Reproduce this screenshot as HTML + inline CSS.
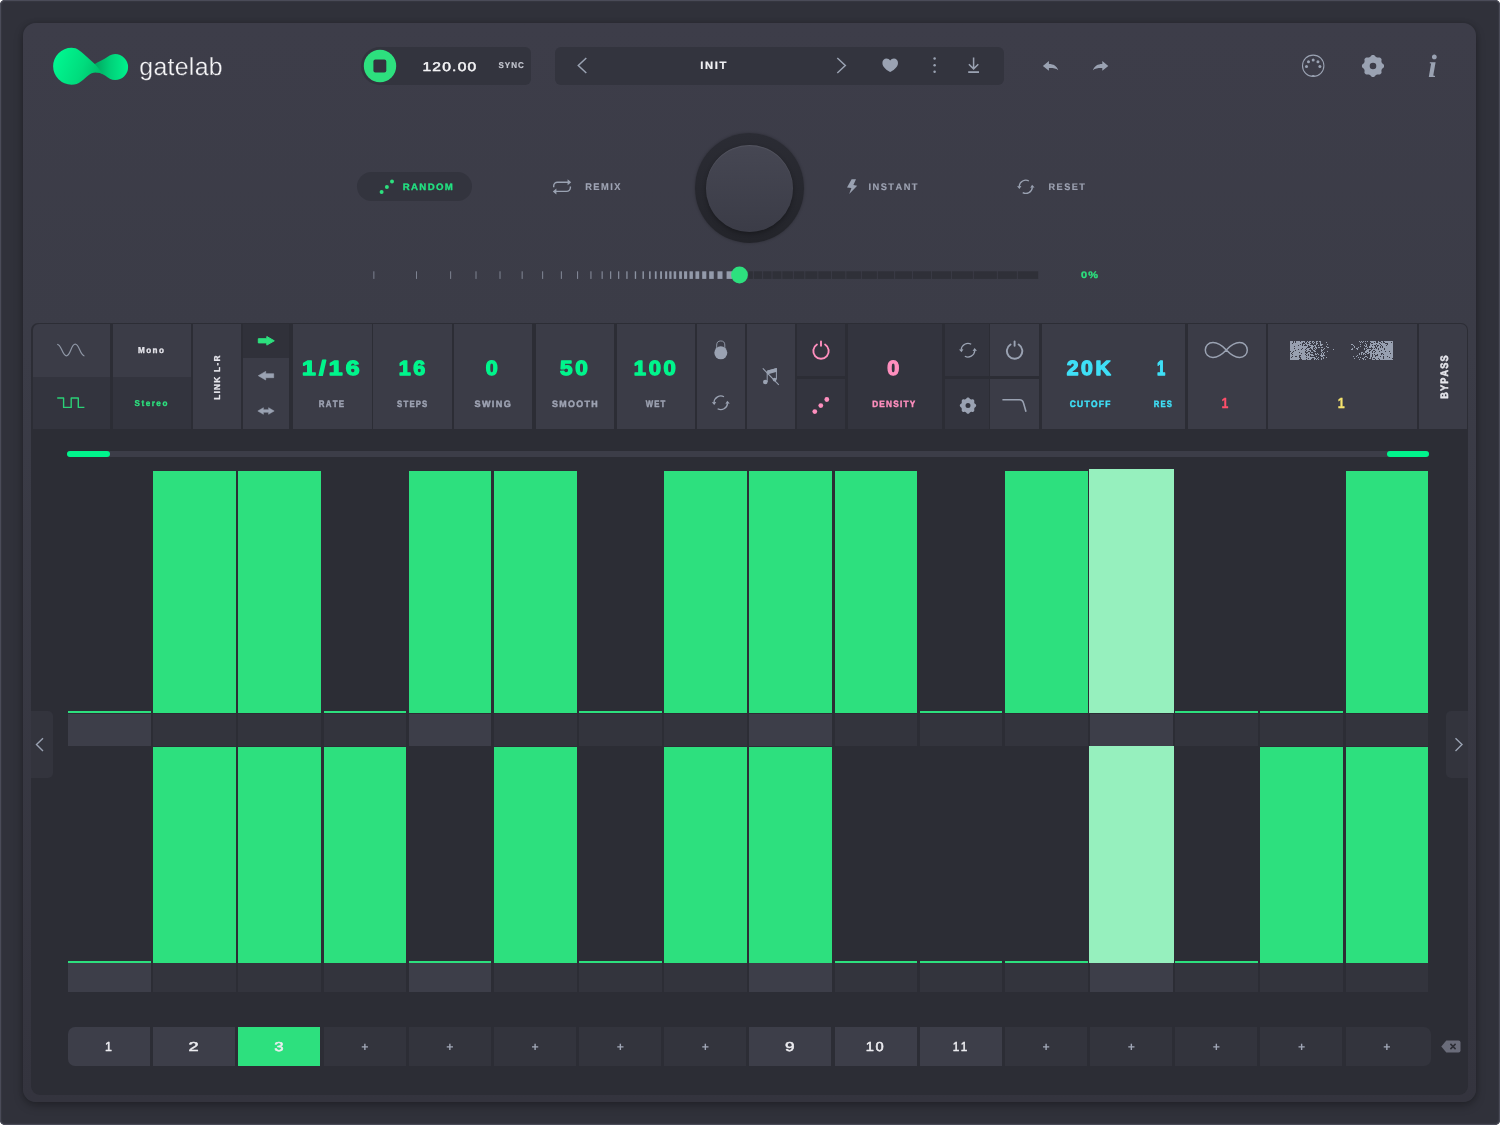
<!DOCTYPE html>
<html lang="en"><head><meta charset="utf-8"><title>gatelab</title><style>
*{box-sizing:border-box;margin:0;padding:0}
html,body{width:1500px;height:1125px;overflow:hidden;background:#fff}
body{font-family:"Liberation Sans",sans-serif;position:relative}
#win{position:absolute;left:0;top:0;width:1500px;height:1125px;border-radius:5px;background:#30313a;overflow:hidden;will-change:transform;box-shadow:inset 0 0 0 1px #4a4b58,inset 0 0 2px 1px #454652}
#main{position:absolute;left:23.2px;top:23.3px;width:1453.3px;height:1078.3px;border-radius:13px;background:linear-gradient(#3d3d49 0%,#3b3c47 30%,#34343e 100%);box-shadow:0 4px 10px rgba(0,0,0,.25),0 0 5px rgba(0,0,0,.15)}
#seq{position:absolute;left:31px;top:322.5px;width:1437px;height:772px;border-radius:7px 7px 9px 9px;background:#2c2d35;overflow:hidden}
.a{position:absolute}
#tx text{font-family:"Liberation Sans",sans-serif;font-weight:bold;text-rendering:geometricPrecision;font-kerning:none;white-space:pre;stroke-linejoin:round}
svg{position:absolute;overflow:visible}
</style></head><body>
<div id="win">
<div id="main"></div>
<div id="seq"></div>
<svg style="left:50px;top:44px" width="82" height="46" viewBox="50 44 82 46"><defs><linearGradient id="lg1" gradientUnits="userSpaceOnUse" x1="53" y1="60" x2="104" y2="80"><stop offset="0" stop-color="#00f891"/><stop offset=".55" stop-color="#00dc7d"/><stop offset="1" stop-color="#00b565"/></linearGradient><linearGradient id="lg2" gradientUnits="userSpaceOnUse" x1="95" y1="66" x2="128" y2="66"><stop offset="0" stop-color="#00a860"/><stop offset=".45" stop-color="#00d179"/><stop offset="1" stop-color="#00f28c"/></linearGradient></defs><path d="M94.8 64 C99 61.5 102 60.3 105 58.6 C108 56.6 111 54.1 115.1 54.1 A13 13 0 0 1 115.1 80.1 C111 80.1 108.5 77.8 105 75.4 C102 73.4 99.5 72.4 96 72.4 Z" fill="url(#lg2)"/><path d="M71.55 47.8 C74.5 47.8 76.8 48.6 78.6 49.9 C80.3 51.1 81.8 52.4 83.4 53.8 L94.8 64 C97.5 66.5 100 70.5 103.5 74.4 C100.5 72.6 98.5 72.4 96 72.4 C92.5 72.4 90.5 73.6 88.2 75.4 C85.5 77.5 84 79.4 81 81.4 C78 83.6 75.5 84.7 71.55 84.7 A18.45 18.45 0 0 1 71.55 47.8 Z" fill="url(#lg1)"/></svg>
<div class="a" style="left:361.3px;top:46.7px;width:169.4px;height:38.6px;background:#33343e;border-radius:19.3px 6px 6px 19.3px"></div>
<svg style="left:361px;top:47px" width="38" height="38" viewBox="361 47 38 38"><circle cx="380" cy="66" r="16.2" fill="#2de07e"/><rect x="373.4" y="59.6" width="12.9" height="12.9" rx="2" fill="#33343e"/></svg>
<div class="a" style="left:554.7px;top:46.5px;width:449.3px;height:38.5px;background:#33343e;border-radius:6px"></div>
<svg style="left:570px;top:50px" width="30" height="30" viewBox="570 50 30 30"><path d="M586.3 58 L578.3 65.5 L586.3 73" fill="none" stroke="#9aa2b2" stroke-width="1.5"/></svg>
<svg style="left:830px;top:50px" width="30" height="30" viewBox="830 50 30 30"><path d="M837.3 58 L845.3 65.5 L837.3 73" fill="none" stroke="#9aa2b2" stroke-width="1.5"/></svg>
<svg style="left:880px;top:56px" width="20" height="18" viewBox="880 56 20 18"><path d="M890.2 72.1 C888 70.8 882.4 67.5 882.4 62.9 C882.4 60.3 884.3 58.6 886.5 58.6 C888 58.6 889.4 59.3 890.2 60.6 C891 59.3 892.4 58.6 893.9 58.6 C896.1 58.6 898 60.3 898 62.9 C898 67.5 892.4 70.8 890.2 72.1 Z" fill="#9aa2b2"/></svg>
<svg style="left:930px;top:55px" width="10" height="20" viewBox="930 55 10 20"><circle cx="934.6" cy="58.6" r="1.25" fill="#9aa2b2"/><circle cx="934.6" cy="65.2" r="1.25" fill="#9aa2b2"/><circle cx="934.6" cy="71.8" r="1.25" fill="#9aa2b2"/></svg>
<svg style="left:965px;top:55px" width="18" height="20" viewBox="965 55 18 20"><path d="M973.6 57.4 V68.6 M968.9 64.2 L973.6 68.9 L978.3 64.2" fill="none" stroke="#9aa2b2" stroke-width="1.5"/><path d="M968.2 72.1 H979" stroke="#9aa2b2" stroke-width="1.8" fill="none"/></svg>
<svg style="left:1040px;top:58px" width="22" height="16" viewBox="1040 58 22 16"><path d="M1042.9 65.9 L1048.9 61.0 V64.0 C1053.5 64.0 1056.8 66.0 1058.3 70.2 C1055.8 68.4 1053 68.0 1048.9 68.1 V70.8 Z" fill="#9aa2b2"/></svg>
<svg style="left:1090px;top:58px" width="22" height="16" viewBox="1090 58 22 16"><g transform="translate(2151.2 0) scale(-1 1)"><path d="M1042.9 65.9 L1048.9 61.0 V64.0 C1053.5 64.0 1056.8 66.0 1058.3 70.2 C1055.8 68.4 1053 68.0 1048.9 68.1 V70.8 Z" fill="#9aa2b2"/></g></svg>
<svg style="left:1300px;top:52px" width="28" height="28" viewBox="1300 52 28 28"><circle cx="1313.2" cy="65.8" r="10.7" fill="none" stroke="#9aa2b2" stroke-width="1.1"/><circle cx="1306.50" cy="66.60" r="1.5" fill="#9aa2b2"/><circle cx="1308.46" cy="61.86" r="1.5" fill="#9aa2b2"/><circle cx="1313.20" cy="59.90" r="1.5" fill="#9aa2b2"/><circle cx="1317.94" cy="61.86" r="1.5" fill="#9aa2b2"/><circle cx="1319.90" cy="66.60" r="1.5" fill="#9aa2b2"/><path d="M1311.3 76.4 A2 2 0 0 1 1315.1 76.4 Z" fill="#9aa2b2"/></svg>
<svg style="left:1360px;top:53px" width="26" height="26" viewBox="1360 53 26 26"><path d="M1373.0 54.9L1373.7 55.0L1374.4 55.3L1375.0 55.9L1375.5 56.6L1376.0 57.0L1376.6 57.3L1377.2 57.5L1377.8 57.6L1378.7 57.5L1379.6 57.4L1380.3 57.7L1380.8 58.2L1381.3 58.7L1381.6 59.4L1381.5 60.3L1381.4 61.2L1381.5 61.8L1381.7 62.4L1382.0 63.0L1382.4 63.5L1383.1 64.0L1383.7 64.6L1384.0 65.3L1384.1 66.0L1384.0 66.7L1383.7 67.4L1383.1 68.0L1382.4 68.5L1382.0 69.0L1381.7 69.6L1381.5 70.2L1381.4 70.8L1381.5 71.7L1381.6 72.6L1381.3 73.3L1380.8 73.8L1380.3 74.3L1379.6 74.6L1378.7 74.5L1377.8 74.4L1377.2 74.5L1376.6 74.7L1376.0 75.0L1375.5 75.4L1375.0 76.1L1374.4 76.7L1373.7 77.0L1373.0 77.1L1372.3 77.0L1371.6 76.7L1371.0 76.1L1370.5 75.4L1370.0 75.0L1369.4 74.7L1368.8 74.5L1368.2 74.4L1367.3 74.5L1366.4 74.6L1365.7 74.3L1365.2 73.8L1364.7 73.3L1364.4 72.6L1364.5 71.7L1364.6 70.8L1364.5 70.2L1364.3 69.6L1364.0 69.0L1363.6 68.5L1362.9 68.0L1362.3 67.4L1362.0 66.7L1361.9 66.0L1362.0 65.3L1362.3 64.6L1362.9 64.0L1363.6 63.5L1364.0 63.0L1364.3 62.4L1364.5 61.8L1364.6 61.2L1364.5 60.3L1364.4 59.4L1364.7 58.7L1365.2 58.2L1365.7 57.7L1366.4 57.4L1367.3 57.5L1368.2 57.6L1368.8 57.5L1369.4 57.3L1370.0 57.0L1370.5 56.6L1371.0 55.9L1371.6 55.3L1372.3 55.0ZM1369.70 66.00a3.3 3.3 0 1 0 6.6 0a3.3 3.3 0 1 0 -6.6 0Z" fill="#9aa2b2" fill-rule="evenodd"/></svg>
<div class="a" style="left:357px;top:172.3px;width:115.3px;height:29px;background:#33343e;border-radius:14.5px"></div>
<svg style="left:376px;top:176px" width="20" height="20" viewBox="376 176 20 20"><circle cx="381.6" cy="192" r="2" fill="#2de07e"/><circle cx="386.9" cy="187" r="2" fill="#2de07e"/><circle cx="392" cy="181.6" r="2" fill="#2de07e"/></svg>
<svg style="left:550px;top:176px" width="24" height="22" viewBox="550 176 24 22"><path d="M553.7 187.2 V186 A3.8 3.8 0 0 1 557.5 182.2 H568.5 M570.4 186.4 V187.6 A3.8 3.8 0 0 1 566.6 191.4 H555.5" fill="none" stroke="#9aa2b2" stroke-width="1.4"/><path d="M567.6 179.2 L571.2 182.2 L567.6 185.2 Z M556.4 188.4 L552.8 191.4 L556.4 194.4 Z" fill="#9aa2b2"/></svg>
<div class="a" style="left:694.7px;top:133.3px;width:109.6px;height:109.6px;border-radius:50%;background:linear-gradient(#2b2c34,#23242a);box-shadow:0 0 3px rgba(0,0,0,.25)"></div>
<div class="a" style="left:706px;top:144.7px;width:87px;height:87px;border-radius:50%;background:linear-gradient(#464753,#3b3c47);box-shadow:inset 0 1px 1px rgba(255,255,255,.08),0 2px 4px rgba(0,0,0,.3)"></div>
<svg style="left:845px;top:177px" width="14" height="19" viewBox="845 177 14 19"><path d="M851.6 179.2 L856 179.2 L853.4 185.1 L857.2 185.7 L849.2 194 L851.4 188 L847 187.4 Z" fill="#9aa2b2"/></svg>
<svg style="left:1014px;top:175px" width="24" height="24" viewBox="1014 175 24 24"><path d="M1028.90 180.97 A6.6 6.6 0 0 0 1019.23 186.22 M1022.70 192.63 A6.6 6.6 0 0 0 1032.37 187.38" fill="none" stroke="#9aa2b2" stroke-width="1.3"/><path d="M1017.00 186.20 L1021.40 185.90 L1019.50 188.89 Z" fill="#9aa2b2"/><path d="M1034.60 187.40 L1030.20 187.70 L1032.10 184.71 Z" fill="#9aa2b2"/></svg>
<svg style="left:360px;top:260px" width="700" height="30" viewBox="360 260 700 30"><rect x="373.42" y="271.3" width="0.90" height="7.6" fill="#959cac" opacity="0.80"/><rect x="416.08" y="271.3" width="0.90" height="7.6" fill="#959cac" opacity="0.81"/><rect x="450.22" y="271.3" width="0.90" height="7.6" fill="#959cac" opacity="0.81"/><rect x="475.55" y="271.3" width="0.90" height="7.6" fill="#959cac" opacity="0.82"/><rect x="499.55" y="271.3" width="0.91" height="7.6" fill="#959cac" opacity="0.83"/><rect x="521.68" y="271.3" width="0.92" height="7.6" fill="#959cac" opacity="0.83"/><rect x="542.20" y="271.3" width="0.93" height="7.6" fill="#959cac" opacity="0.84"/><rect x="560.86" y="271.3" width="0.95" height="7.6" fill="#959cac" opacity="0.85"/><rect x="577.11" y="271.3" width="0.97" height="7.6" fill="#959cac" opacity="0.86"/><rect x="590.43" y="271.3" width="1.01" height="7.6" fill="#959cac" opacity="0.86"/><rect x="601.61" y="271.3" width="1.05" height="7.6" fill="#959cac" opacity="0.87"/><rect x="610.11" y="271.3" width="1.11" height="7.6" fill="#959cac" opacity="0.88"/><rect x="618.08" y="271.3" width="1.17" height="7.6" fill="#959cac" opacity="0.88"/><rect x="626.31" y="271.3" width="1.25" height="7.6" fill="#959cac" opacity="0.89"/><rect x="634.79" y="271.3" width="1.35" height="7.6" fill="#959cac" opacity="0.90"/><rect x="642.47" y="271.3" width="1.46" height="7.6" fill="#959cac" opacity="0.90"/><rect x="649.07" y="271.3" width="1.59" height="7.6" fill="#959cac" opacity="0.91"/><rect x="654.87" y="271.3" width="1.73" height="7.6" fill="#959cac" opacity="0.92"/><rect x="660.12" y="271.3" width="1.90" height="7.6" fill="#959cac" opacity="0.92"/><rect x="665.09" y="271.3" width="2.09" height="7.6" fill="#959cac" opacity="0.93"/><rect x="669.25" y="271.3" width="2.30" height="7.6" fill="#959cac" opacity="0.94"/><rect x="673.66" y="271.3" width="2.54" height="7.6" fill="#959cac" opacity="0.94"/><rect x="679.13" y="271.3" width="2.80" height="7.6" fill="#959cac" opacity="0.95"/><rect x="684.05" y="271.3" width="3.09" height="7.6" fill="#959cac" opacity="0.96"/><rect x="689.49" y="271.3" width="3.41" height="7.6" fill="#959cac" opacity="0.97"/><rect x="695.45" y="271.3" width="3.76" height="7.6" fill="#959cac" opacity="0.97"/><rect x="702.19" y="271.3" width="4.14" height="7.6" fill="#959cac" opacity="0.98"/><rect x="709.19" y="271.3" width="4.56" height="7.6" fill="#959cac" opacity="0.99"/><rect x="717.49" y="271.3" width="5.01" height="7.6" fill="#959cac" opacity="0.99"/><rect x="726.58" y="271.3" width="5.50" height="7.6" fill="#959cac" opacity="1.00"/><rect x="748.45" y="271.3" width="4.43" height="7.6" fill="#2f3038"/><rect x="753.78" y="271.3" width="8.43" height="7.6" fill="#2f3038"/><rect x="763.12" y="271.3" width="8.43" height="7.6" fill="#2f3038"/><rect x="772.45" y="271.3" width="8.97" height="7.6" fill="#2f3038"/><rect x="782.32" y="271.3" width="10.57" height="7.6" fill="#2f3038"/><rect x="793.78" y="271.3" width="10.57" height="7.6" fill="#2f3038"/><rect x="805.25" y="271.3" width="12.17" height="7.6" fill="#2f3038"/><rect x="818.32" y="271.3" width="12.70" height="7.6" fill="#2f3038"/><rect x="831.92" y="271.3" width="13.50" height="7.6" fill="#2f3038"/><rect x="846.32" y="271.3" width="14.57" height="7.6" fill="#2f3038"/><rect x="861.78" y="271.3" width="15.10" height="7.6" fill="#2f3038"/><rect x="877.78" y="271.3" width="16.43" height="7.6" fill="#2f3038"/><rect x="895.12" y="271.3" width="16.97" height="7.6" fill="#2f3038"/><rect x="912.98" y="271.3" width="18.03" height="7.6" fill="#2f3038"/><rect x="931.92" y="271.3" width="19.10" height="7.6" fill="#2f3038"/><rect x="951.92" y="271.3" width="20.97" height="7.6" fill="#2f3038"/><rect x="973.78" y="271.3" width="23.10" height="7.6" fill="#2f3038"/><rect x="997.78" y="271.3" width="19.10" height="7.6" fill="#2f3038"/><rect x="1017.78" y="271.3" width="20.43" height="7.6" fill="#2f3038"/><circle cx="739.5" cy="275" r="8.4" fill="#2de07e"/></svg>
<div class="a" style="left:32.5px;top:324px;width:77.5px;height:52.5px;background:#3b3c47;border-top-left-radius:6px"></div>
<div class="a" style="left:32.5px;top:376.5px;width:77.5px;height:52.5px;background:#33343e;"></div>
<div class="a" style="left:112.5px;top:324px;width:78px;height:52.5px;background:#3b3c47;"></div>
<div class="a" style="left:112.5px;top:376.5px;width:78px;height:52.5px;background:#33343e;"></div>
<div class="a" style="left:193px;top:324px;width:47.5px;height:105px;background:#3b3c47;"></div>
<div class="a" style="left:243px;top:324px;width:46px;height:33.7px;background:#30313a;"></div>
<div class="a" style="left:243px;top:357.7px;width:46px;height:71.3px;background:#3b3c47;"></div>
<div class="a" style="left:293px;top:324px;width:78.5px;height:105px;background:#3b3c47;"></div>
<div class="a" style="left:373px;top:324px;width:79px;height:105px;background:#3b3c47;"></div>
<div class="a" style="left:454px;top:324px;width:78px;height:105px;background:#3b3c47;"></div>
<div class="a" style="left:536px;top:324px;width:78px;height:105px;background:#3b3c47;"></div>
<div class="a" style="left:616.5px;top:324px;width:78.5px;height:105px;background:#3b3c47;"></div>
<div class="a" style="left:697px;top:324px;width:47.5px;height:105px;background:#3b3c47;"></div>
<div class="a" style="left:747px;top:324px;width:47.5px;height:105px;background:#3b3c47;"></div>
<div class="a" style="left:797px;top:324px;width:48px;height:52.3px;background:#33343e;"></div>
<div class="a" style="left:797px;top:378.8px;width:48px;height:50.2px;background:#33343e;"></div>
<div class="a" style="left:847.5px;top:324px;width:94px;height:105px;background:#33343e;"></div>
<div class="a" style="left:944.5px;top:324px;width:44.5px;height:52.3px;background:#33343e;"></div>
<div class="a" style="left:944.5px;top:378.8px;width:44.5px;height:50.2px;background:#33343e;"></div>
<div class="a" style="left:990.3px;top:324px;width:48.7px;height:52.3px;background:#3b3c47;"></div>
<div class="a" style="left:990.3px;top:378.8px;width:48.7px;height:50.2px;background:#3b3c47;"></div>
<div class="a" style="left:1041.5px;top:324px;width:143.5px;height:105px;background:#3b3c47;"></div>
<div class="a" style="left:1187.5px;top:324px;width:78px;height:105px;background:#3b3c47;"></div>
<div class="a" style="left:1268px;top:324px;width:149px;height:105px;background:#3b3c47;"></div>
<div class="a" style="left:1419px;top:324px;width:47.7px;height:105px;background:#3b3c47;border-top-right-radius:6px"></div>
<svg style="left:55px;top:342px" width="32" height="16" viewBox="55 342 32 16"><path d="M57.2 344.3 C61.5 344.3 62.2 355.8 66.4 355.8 C70.6 355.8 71 344.2 75.2 344.2 C79.4 344.2 80.2 355.8 84.4 355.8" fill="none" stroke="#8f97a6" stroke-width="1.2"/></svg>
<svg style="left:55px;top:395px" width="32" height="16" viewBox="55 395 32 16"><path d="M57.2 398 H63.6 V407.4 H71.2 V398 H78.3 V407.4 H84.4" fill="none" stroke="#2bd077" stroke-width="1.4" stroke-linejoin="round"/></svg>
<svg style="left:256px;top:335px" width="20" height="12" viewBox="256 335 20 12"><path d="M258.3 338.7 H266.8 V336.5 L274.3 340.8 L266.8 345.1 V342.90000000000003 H258.3 Z" fill="#2de07e" stroke="#2de07e" stroke-width="1" stroke-linejoin="round"/></svg>
<svg style="left:256px;top:370px" width="20" height="12" viewBox="256 370 20 12"><g transform="translate(532 0) scale(-1 1)"><path d="M258.3 373.7 H266.3 V371.4 L273.7 375.7 L266.3 380.0 V377.7 H258.3 Z" fill="#9aa2b2" stroke="#9aa2b2" stroke-width="0.6" stroke-linejoin="round"/></g></svg>
<svg style="left:256px;top:405px" width="20" height="12" viewBox="256 405 20 12"><path d="M257.8 411 L263.4 407.7 V409.7 H268.6 V407.7 L274.2 411 L268.6 414.3 V412.3 H263.4 V414.3 Z" fill="#9aa2b2" stroke="#9aa2b2" stroke-width="0.5" stroke-linejoin="round"/></svg>
<svg style="left:712px;top:338px" width="18" height="24" viewBox="712 338 18 24"><path d="M716.7 349 V345 A4.05 4.05 0 0 1 724.8 345 V349" fill="none" stroke="#9aa2b2" stroke-width="1" opacity=".85"/><circle cx="720.8" cy="352.8" r="6.5" fill="#9aa2b2"/></svg>
<svg style="left:710px;top:392px" width="22" height="22" viewBox="710 392 22 22"><path d="M723.99 396.80 A6.8 6.8 0 0 0 714.03 402.21 M717.61 408.80 A6.8 6.8 0 0 0 727.57 403.39" fill="none" stroke="#9aa2b2" stroke-width="1.3"/><path d="M711.80 402.20 L716.20 401.90 L714.30 404.89 Z" fill="#9aa2b2"/><path d="M729.80 403.40 L725.40 403.70 L727.30 400.71 Z" fill="#9aa2b2"/></svg>
<svg style="left:957px;top:339px" width="22" height="22" viewBox="957 339 22 22"><path d="M971.19 344.20 A6.8 6.8 0 0 0 961.23 349.61 M964.81 356.20 A6.8 6.8 0 0 0 974.77 350.79" fill="none" stroke="#9aa2b2" stroke-width="1.3"/><path d="M959.00 349.60 L963.40 349.30 L961.50 352.29 Z" fill="#9aa2b2"/><path d="M977.00 350.80 L972.60 351.10 L974.50 348.11 Z" fill="#9aa2b2"/></svg>
<svg style="left:760px;top:366px" width="22" height="22" viewBox="760 366 22 22"><circle cx="765.3" cy="382" r="2.3" fill="#9aa2b2"/><path d="M767.2 382 V371.3 L776.4 368.6 V379.3" fill="none" stroke="#9aa2b2" stroke-width="1"/><path d="M767.2 370.6 L776.9 368 V371.8 L767.2 374.4 Z" fill="#9aa2b2"/><circle cx="774.6" cy="379.6" r="1.9" fill="#9aa2b2"/><path d="M762.8 368.3 L778.8 384.8" stroke="#9aa2b2" stroke-width="1.1" fill="none"/></svg>
<svg style="left:810px;top:339px" width="22" height="22" viewBox="810 339 22 22"><path d="M825.08 344.47 A7.7 7.7 0 1 1 816.92 344.47" fill="none" stroke="#ff8fbe" stroke-width="1.9" stroke-linecap="round"/><path d="M821 341.4 V345.8" stroke="#ff8fbe" stroke-width="1.9" stroke-linecap="round" fill="none"/></svg>
<svg style="left:1004px;top:339px" width="22" height="22" viewBox="1004 339 22 22"><path d="M1018.68 344.47 A7.7 7.7 0 1 1 1010.52 344.47" fill="none" stroke="#9aa2b2" stroke-width="1.9" stroke-linecap="round"/><path d="M1014.6 341.4 V345.8" stroke="#9aa2b2" stroke-width="1.9" stroke-linecap="round" fill="none"/></svg>
<svg style="left:811px;top:396px" width="20" height="20" viewBox="811 396 20 20"><circle cx="814.8" cy="411.6" r="2.4" fill="#ff8fbe"/><circle cx="820.8" cy="405.6" r="2.4" fill="#ff8fbe"/><circle cx="826.8" cy="399.5" r="2.4" fill="#ff8fbe"/></svg>
<svg style="left:958px;top:395px" width="20" height="20" viewBox="958 395 20 20"><path d="M968.0 397.4L968.5 397.5L969.0 397.7L969.5 398.2L969.8 398.7L970.2 399.0L970.6 399.2L971.1 399.4L971.6 399.4L972.2 399.3L972.9 399.3L973.4 399.5L973.8 399.8L974.1 400.2L974.3 400.7L974.3 401.4L974.2 402.0L974.2 402.5L974.4 403.0L974.6 403.4L974.9 403.8L975.4 404.1L975.9 404.6L976.1 405.1L976.2 405.6L976.1 406.1L975.9 406.6L975.4 407.1L974.9 407.4L974.6 407.8L974.4 408.2L974.2 408.7L974.2 409.2L974.3 409.8L974.3 410.5L974.1 411.0L973.8 411.4L973.4 411.7L972.9 411.9L972.2 411.9L971.6 411.8L971.1 411.8L970.6 412.0L970.2 412.2L969.8 412.5L969.5 413.0L969.0 413.5L968.5 413.7L968.0 413.8L967.5 413.7L967.0 413.5L966.5 413.0L966.2 412.5L965.8 412.2L965.4 412.0L964.9 411.8L964.4 411.8L963.8 411.9L963.1 411.9L962.6 411.7L962.2 411.4L961.9 411.0L961.7 410.5L961.7 409.8L961.8 409.2L961.8 408.7L961.6 408.2L961.4 407.8L961.1 407.4L960.6 407.1L960.1 406.6L959.9 406.1L959.8 405.6L959.9 405.1L960.1 404.6L960.6 404.1L961.1 403.8L961.4 403.4L961.6 403.0L961.8 402.5L961.8 402.0L961.7 401.4L961.7 400.7L961.9 400.2L962.2 399.8L962.6 399.5L963.1 399.3L963.8 399.3L964.4 399.4L964.9 399.4L965.4 399.2L965.8 399.0L966.2 398.7L966.5 398.2L967.0 397.7L967.5 397.5ZM965.50 405.60a2.5 2.5 0 1 0 5.0 0a2.5 2.5 0 1 0 -5.0 0Z" fill="#9aa2b2" fill-rule="evenodd"/></svg>
<svg style="left:1000px;top:397px" width="28" height="16" viewBox="1000 397 28 16"><path d="M1002.4 399.8 H1019.6 C1022.4 399.8 1023 401.2 1023.6 403.4 L1026 411.8" fill="none" stroke="#9aa2b2" stroke-width="1.6"/></svg>
<svg style="left:1203px;top:340px" width="46" height="20" viewBox="1203 340 46 20"><path d="M1226.3 350 C1231.5 344.5 1235.8 342.6 1239.6 342.6 C1244.2 342.6 1247.3 345.8 1247.3 350 C1247.3 354.2 1244.2 357.4 1239.6 357.4 C1235.8 357.4 1231.5 355.5 1226.3 350 C1221.1 344.5 1216.8 342.6 1213 342.6 C1208.4 342.6 1205.3 345.8 1205.3 350 C1205.3 354.2 1208.4 357.4 1213 357.4 C1216.8 357.4 1221.1 355.5 1226.3 350 Z" fill="none" stroke="#9aa2b2" stroke-width="1.5"/></svg>
<svg style="left:1289px;top:340px" width="48" height="20" viewBox="1289 340 48 20"><path d="M1290 340.6h1v10h-1zM1290 351.6h1v8h-1zM1291 340.6h1v12h-1zM1291 353.6h1v3h-1zM1291 357.6h1v2h-1zM1292 340.6h1v2h-1zM1292 343.6h1v8h-1zM1292 352.6h1v1h-1zM1292 354.6h1v1h-1zM1292 356.6h1v3h-1zM1293 342.6h1v8h-1zM1293 351.6h1v8h-1zM1294 340.6h1v5h-1zM1294 346.6h1v1h-1zM1294 348.6h1v11h-1zM1295 342.6h1v7h-1zM1295 350.6h1v5h-1zM1295 356.6h1v3h-1zM1296 340.6h1v15h-1zM1296 356.6h1v3h-1zM1297 340.6h1v19h-1zM1298 340.6h1v4h-1zM1298 345.6h1v3h-1zM1298 349.6h1v10h-1zM1299 340.6h1v11h-1zM1299 352.6h1v2h-1zM1299 357.6h1v1h-1zM1300 341.6h1v2h-1zM1300 344.6h1v10h-1zM1300 355.6h1v1h-1zM1301 340.6h1v8h-1zM1301 349.6h1v3h-1zM1301 353.6h1v5h-1zM1302 340.6h1v2h-1zM1302 345.6h1v2h-1zM1302 348.6h1v11h-1zM1303 340.6h1v1h-1zM1303 343.6h1v16h-1zM1304 340.6h1v2h-1zM1304 343.6h1v1h-1zM1304 345.6h1v14h-1zM1305 342.6h1v1h-1zM1305 345.6h1v3h-1zM1305 349.6h1v1h-1zM1305 352.6h1v1h-1zM1305 354.6h1v5h-1zM1306 341.6h1v3h-1zM1306 345.6h1v2h-1zM1306 348.6h1v1h-1zM1306 350.6h1v1h-1zM1306 353.6h1v1h-1zM1306 355.6h1v1h-1zM1306 357.6h1v1h-1zM1307 340.6h1v1h-1zM1307 343.6h1v3h-1zM1307 347.6h1v4h-1zM1307 352.6h1v7h-1zM1308 341.6h1v1h-1zM1308 343.6h1v1h-1zM1308 347.6h1v3h-1zM1308 351.6h1v2h-1zM1308 355.6h1v2h-1zM1308 358.6h1v1h-1zM1309 340.6h1v5h-1zM1309 347.6h1v1h-1zM1309 349.6h1v1h-1zM1309 351.6h1v8h-1zM1310 340.6h1v1h-1zM1310 342.6h1v1h-1zM1310 344.6h1v1h-1zM1310 346.6h1v1h-1zM1310 349.6h1v2h-1zM1310 353.6h1v1h-1zM1310 356.6h1v3h-1zM1311 344.6h1v4h-1zM1311 351.6h1v1h-1zM1311 353.6h1v2h-1zM1311 356.6h1v2h-1zM1312 340.6h1v2h-1zM1312 344.6h1v5h-1zM1312 351.6h1v1h-1zM1312 353.6h1v2h-1zM1312 356.6h1v1h-1zM1313 340.6h1v1h-1zM1313 342.6h1v1h-1zM1313 345.6h1v1h-1zM1313 349.6h1v1h-1zM1313 354.6h1v1h-1zM1313 356.6h1v1h-1zM1314 341.6h1v1h-1zM1314 344.6h1v1h-1zM1314 347.6h1v1h-1zM1314 349.6h1v2h-1zM1314 356.6h1v3h-1zM1315 344.6h1v3h-1zM1315 348.6h1v1h-1zM1315 350.6h1v1h-1zM1315 352.6h1v2h-1zM1315 357.6h1v1h-1zM1316 340.6h1v4h-1zM1316 346.6h1v2h-1zM1316 353.6h1v1h-1zM1316 355.6h1v1h-1zM1316 358.6h1v1h-1zM1317 340.6h1v1h-1zM1317 342.6h1v1h-1zM1317 352.6h1v1h-1zM1317 357.6h1v1h-1zM1318 344.6h1v1h-1zM1318 346.6h1v1h-1zM1318 353.6h1v1h-1zM1318 356.6h1v1h-1zM1318 358.6h1v1h-1zM1319 340.6h1v1h-1zM1319 346.6h1v1h-1zM1320 340.6h1v5h-1zM1320 354.6h1v1h-1zM1321 343.6h1v2h-1zM1321 346.6h1v1h-1zM1321 348.6h1v3h-1zM1321 352.6h1v4h-1zM1321 357.6h1v2h-1zM1322 343.6h1v1h-1zM1322 346.6h1v1h-1zM1322 349.6h1v1h-1zM1322 351.6h1v1h-1zM1322 354.6h1v2h-1zM1323 348.6h1v1h-1zM1323 352.6h1v3h-1zM1323 356.6h1v2h-1zM1324 347.6h1v1h-1zM1324 351.6h1v1h-1zM1324 354.6h1v1h-1zM1326 341.6h1v1h-1zM1326 345.6h1v1h-1zM1326 356.6h1v1h-1zM1327 343.6h1v1h-1zM1327 346.6h1v1h-1zM1327 350.6h1v1h-1zM1328 346.6h1v1h-1zM1333 348.6h1v1h-1z" fill="#98a0b0" shape-rendering="crispEdges"/></svg>
<svg style="left:1348px;top:340px" width="46" height="20" viewBox="1348 340 46 20"><path d="M1392 340.6h1v17h-1zM1392 358.6h1v1h-1zM1391 340.6h1v1h-1zM1391 342.6h1v17h-1zM1390 340.6h1v12h-1zM1390 353.6h1v6h-1zM1389 340.6h1v10h-1zM1389 351.6h1v5h-1zM1389 357.6h1v2h-1zM1388 340.6h1v19h-1zM1387 340.6h1v2h-1zM1387 344.6h1v11h-1zM1387 356.6h1v3h-1zM1386 340.6h1v2h-1zM1386 343.6h1v1h-1zM1386 345.6h1v14h-1zM1385 340.6h1v2h-1zM1385 343.6h1v7h-1zM1385 351.6h1v8h-1zM1384 340.6h1v1h-1zM1384 342.6h1v5h-1zM1384 349.6h1v10h-1zM1383 342.6h1v11h-1zM1383 354.6h1v1h-1zM1383 358.6h1v1h-1zM1382 340.6h1v5h-1zM1382 347.6h1v5h-1zM1382 353.6h1v6h-1zM1381 340.6h1v1h-1zM1381 342.6h1v2h-1zM1381 345.6h1v4h-1zM1381 350.6h1v2h-1zM1381 354.6h1v5h-1zM1380 341.6h1v2h-1zM1380 344.6h1v1h-1zM1380 347.6h1v8h-1zM1380 356.6h1v3h-1zM1379 341.6h1v1h-1zM1379 343.6h1v7h-1zM1379 351.6h1v7h-1zM1378 340.6h1v4h-1zM1378 345.6h1v2h-1zM1378 349.6h1v8h-1zM1378 358.6h1v1h-1zM1377 342.6h1v2h-1zM1377 346.6h1v7h-1zM1377 355.6h1v4h-1zM1376 342.6h1v1h-1zM1376 344.6h1v2h-1zM1376 348.6h1v6h-1zM1376 355.6h1v4h-1zM1375 340.6h1v4h-1zM1375 347.6h1v3h-1zM1375 351.6h1v3h-1zM1375 356.6h1v2h-1zM1374 340.6h1v1h-1zM1374 342.6h1v2h-1zM1374 345.6h1v2h-1zM1374 348.6h1v1h-1zM1374 350.6h1v1h-1zM1374 352.6h1v1h-1zM1374 354.6h1v3h-1zM1374 358.6h1v1h-1zM1373 340.6h1v9h-1zM1373 350.6h1v7h-1zM1373 358.6h1v1h-1zM1372 340.6h1v2h-1zM1372 343.6h1v1h-1zM1372 345.6h1v2h-1zM1372 348.6h1v2h-1zM1372 352.6h1v1h-1zM1372 356.6h1v3h-1zM1371 340.6h1v2h-1zM1371 343.6h1v3h-1zM1371 349.6h1v7h-1zM1370 340.6h1v1h-1zM1370 342.6h1v5h-1zM1370 348.6h1v1h-1zM1370 350.6h1v8h-1zM1369 345.6h1v2h-1zM1369 348.6h1v1h-1zM1369 351.6h1v1h-1zM1369 357.6h1v1h-1zM1368 348.6h1v5h-1zM1367 340.6h1v1h-1zM1367 346.6h1v1h-1zM1367 348.6h1v3h-1zM1367 352.6h1v1h-1zM1367 356.6h1v1h-1zM1366 343.6h1v3h-1zM1366 347.6h1v1h-1zM1366 349.6h1v3h-1zM1366 355.6h1v1h-1zM1365 340.6h1v1h-1zM1365 342.6h1v1h-1zM1365 345.6h1v1h-1zM1365 350.6h1v2h-1zM1365 353.6h1v1h-1zM1365 355.6h1v1h-1zM1365 358.6h1v1h-1zM1364 344.6h1v1h-1zM1364 347.6h1v2h-1zM1364 352.6h1v1h-1zM1364 356.6h1v1h-1zM1363 340.6h1v1h-1zM1363 352.6h1v2h-1zM1363 357.6h1v2h-1zM1362 341.6h1v1h-1zM1362 351.6h1v1h-1zM1362 357.6h1v1h-1zM1361 340.6h1v1h-1zM1361 351.6h1v3h-1zM1360 341.6h1v1h-1zM1360 343.6h1v1h-1zM1360 345.6h1v1h-1zM1360 356.6h1v1h-1zM1359 340.6h1v1h-1zM1359 352.6h1v2h-1zM1359 358.6h1v1h-1zM1358 346.6h1v1h-1zM1358 356.6h1v1h-1zM1357 347.6h1v2h-1zM1357 354.6h1v1h-1zM1356 347.6h1v1h-1zM1356 355.6h1v1h-1zM1354 345.6h1v2h-1zM1354 357.6h1v1h-1zM1353 344.6h1v1h-1zM1353 355.6h1v1h-1zM1352 343.6h1v1h-1zM1352 347.6h1v2h-1zM1351 343.6h1v1h-1zM1351 348.6h1v1h-1z" fill="#98a0b0" shape-rendering="crispEdges"/></svg>
<div class="a" style="left:67px;top:451px;width:1362px;height:6px;background:#3c3d48;border-radius:3px"></div>
<div class="a" style="left:67px;top:451px;width:42.5px;height:6px;background:#00f58c;border-radius:3px"></div>
<div class="a" style="left:1386.5px;top:451px;width:42.5px;height:6px;background:#00f58c;border-radius:3px"></div>
<div class="a" style="left:68px;top:713.6px;width:82.8px;height:32px;background:#3d3e49;"></div>
<div class="a" style="left:68px;top:710.9px;width:82.8px;height:2px;background:#2de07e;"></div>
<div class="a" style="left:153.17px;top:713.6px;width:82.8px;height:32px;background:#33343d;"></div>
<div class="a" style="left:153.17px;top:470.8px;width:82.8px;height:242.1px;background:#2de07e;"></div>
<div class="a" style="left:238.33px;top:713.6px;width:82.8px;height:32px;background:#33343d;"></div>
<div class="a" style="left:238.33px;top:470.8px;width:82.8px;height:242.1px;background:#2de07e;"></div>
<div class="a" style="left:323.5px;top:713.6px;width:82.8px;height:32px;background:#33343d;"></div>
<div class="a" style="left:323.5px;top:710.9px;width:82.8px;height:2px;background:#2de07e;"></div>
<div class="a" style="left:408.67px;top:713.6px;width:82.8px;height:32px;background:#3d3e49;"></div>
<div class="a" style="left:408.67px;top:470.8px;width:82.8px;height:242.1px;background:#2de07e;"></div>
<div class="a" style="left:493.83px;top:713.6px;width:82.8px;height:32px;background:#33343d;"></div>
<div class="a" style="left:493.83px;top:470.8px;width:82.8px;height:242.1px;background:#2de07e;"></div>
<div class="a" style="left:579px;top:713.6px;width:82.8px;height:32px;background:#33343d;"></div>
<div class="a" style="left:579px;top:710.9px;width:82.8px;height:2px;background:#2de07e;"></div>
<div class="a" style="left:664.17px;top:713.6px;width:82.8px;height:32px;background:#33343d;"></div>
<div class="a" style="left:664.17px;top:470.8px;width:82.8px;height:242.1px;background:#2de07e;"></div>
<div class="a" style="left:749.33px;top:713.6px;width:82.8px;height:32px;background:#3d3e49;"></div>
<div class="a" style="left:749.33px;top:470.8px;width:82.8px;height:242.1px;background:#2de07e;"></div>
<div class="a" style="left:834.5px;top:713.6px;width:82.8px;height:32px;background:#33343d;"></div>
<div class="a" style="left:834.5px;top:470.8px;width:82.8px;height:242.1px;background:#2de07e;"></div>
<div class="a" style="left:919.67px;top:713.6px;width:82.8px;height:32px;background:#33343d;"></div>
<div class="a" style="left:919.67px;top:710.9px;width:82.8px;height:2px;background:#2de07e;"></div>
<div class="a" style="left:1004.83px;top:713.6px;width:82.8px;height:32px;background:#33343d;"></div>
<div class="a" style="left:1004.83px;top:470.8px;width:82.8px;height:242.1px;background:#2de07e;"></div>
<div class="a" style="left:1090px;top:713.6px;width:82.8px;height:32px;background:#3d3e49;"></div>
<div class="a" style="left:1088.8px;top:469.3px;width:85.3px;height:244px;background:#96f0be;"></div>
<div class="a" style="left:1175.17px;top:713.6px;width:82.8px;height:32px;background:#33343d;"></div>
<div class="a" style="left:1175.17px;top:710.9px;width:82.8px;height:2px;background:#2de07e;"></div>
<div class="a" style="left:1260.33px;top:713.6px;width:82.8px;height:32px;background:#33343d;"></div>
<div class="a" style="left:1260.33px;top:710.9px;width:82.8px;height:2px;background:#2de07e;"></div>
<div class="a" style="left:1345.5px;top:713.6px;width:82.8px;height:32px;background:#33343d;"></div>
<div class="a" style="left:1345.5px;top:470.8px;width:82.8px;height:242.1px;background:#2de07e;"></div>
<div class="a" style="left:68px;top:963.3px;width:82.8px;height:28.5px;background:#3d3e49;"></div>
<div class="a" style="left:68px;top:960.6px;width:82.8px;height:2px;background:#2de07e;"></div>
<div class="a" style="left:153.17px;top:963.3px;width:82.8px;height:28.5px;background:#33343d;"></div>
<div class="a" style="left:153.17px;top:747.2px;width:82.8px;height:215.4px;background:#2de07e;"></div>
<div class="a" style="left:238.33px;top:963.3px;width:82.8px;height:28.5px;background:#33343d;"></div>
<div class="a" style="left:238.33px;top:747.2px;width:82.8px;height:215.4px;background:#2de07e;"></div>
<div class="a" style="left:323.5px;top:963.3px;width:82.8px;height:28.5px;background:#33343d;"></div>
<div class="a" style="left:323.5px;top:747.2px;width:82.8px;height:215.4px;background:#2de07e;"></div>
<div class="a" style="left:408.67px;top:963.3px;width:82.8px;height:28.5px;background:#3d3e49;"></div>
<div class="a" style="left:408.67px;top:960.6px;width:82.8px;height:2px;background:#2de07e;"></div>
<div class="a" style="left:493.83px;top:963.3px;width:82.8px;height:28.5px;background:#33343d;"></div>
<div class="a" style="left:493.83px;top:747.2px;width:82.8px;height:215.4px;background:#2de07e;"></div>
<div class="a" style="left:579px;top:963.3px;width:82.8px;height:28.5px;background:#33343d;"></div>
<div class="a" style="left:579px;top:960.6px;width:82.8px;height:2px;background:#2de07e;"></div>
<div class="a" style="left:664.17px;top:963.3px;width:82.8px;height:28.5px;background:#33343d;"></div>
<div class="a" style="left:664.17px;top:747.2px;width:82.8px;height:215.4px;background:#2de07e;"></div>
<div class="a" style="left:749.33px;top:963.3px;width:82.8px;height:28.5px;background:#3d3e49;"></div>
<div class="a" style="left:749.33px;top:747.2px;width:82.8px;height:215.4px;background:#2de07e;"></div>
<div class="a" style="left:834.5px;top:963.3px;width:82.8px;height:28.5px;background:#33343d;"></div>
<div class="a" style="left:834.5px;top:960.6px;width:82.8px;height:2px;background:#2de07e;"></div>
<div class="a" style="left:919.67px;top:963.3px;width:82.8px;height:28.5px;background:#33343d;"></div>
<div class="a" style="left:919.67px;top:960.6px;width:82.8px;height:2px;background:#2de07e;"></div>
<div class="a" style="left:1004.83px;top:963.3px;width:82.8px;height:28.5px;background:#33343d;"></div>
<div class="a" style="left:1004.83px;top:960.6px;width:82.8px;height:2px;background:#2de07e;"></div>
<div class="a" style="left:1090px;top:963.3px;width:82.8px;height:28.5px;background:#3d3e49;"></div>
<div class="a" style="left:1088.8px;top:745.7px;width:85.3px;height:217.3px;background:#96f0be;"></div>
<div class="a" style="left:1175.17px;top:963.3px;width:82.8px;height:28.5px;background:#33343d;"></div>
<div class="a" style="left:1175.17px;top:960.6px;width:82.8px;height:2px;background:#2de07e;"></div>
<div class="a" style="left:1260.33px;top:963.3px;width:82.8px;height:28.5px;background:#33343d;"></div>
<div class="a" style="left:1260.33px;top:747.2px;width:82.8px;height:215.4px;background:#2de07e;"></div>
<div class="a" style="left:1345.5px;top:963.3px;width:82.8px;height:28.5px;background:#33343d;"></div>
<div class="a" style="left:1345.5px;top:747.2px;width:82.8px;height:215.4px;background:#2de07e;"></div>
<div class="a" style="left:31px;top:711px;width:22px;height:66.5px;background:#33343d;border-radius:0 5px 5px 0"></div>
<div class="a" style="left:1446px;top:711px;width:22px;height:66.5px;background:#33343d;border-radius:5px 0 0 5px"></div>
<svg style="left:31px;top:711px" width="22" height="67" viewBox="31 711 22 67"><path d="M43 738.2 L36.5 744.6 L43 751" fill="none" stroke="#9aa2b2" stroke-width="1.4"/></svg>
<svg style="left:1446px;top:711px" width="22" height="67" viewBox="1446 711 22 67"><path d="M1455.5 738.2 L1462 744.6 L1455.5 751" fill="none" stroke="#9aa2b2" stroke-width="1.4"/></svg>
<div class="a" style="left:68px;top:1026.6px;width:82px;height:39.7px;background:#3d3e49;border-radius:7px 0 0 7px"></div>
<div class="a" style="left:153.17px;top:1026.6px;width:82px;height:39.7px;background:#3d3e49;"></div>
<div class="a" style="left:238.33px;top:1026.6px;width:82px;height:39.7px;background:#2de07e;"></div>
<div class="a" style="left:323.5px;top:1026.6px;width:82px;height:39.7px;background:#33343d;"></div>
<div class="a" style="left:408.67px;top:1026.6px;width:82px;height:39.7px;background:#33343d;"></div>
<div class="a" style="left:493.83px;top:1026.6px;width:82px;height:39.7px;background:#33343d;"></div>
<div class="a" style="left:579px;top:1026.6px;width:82px;height:39.7px;background:#33343d;"></div>
<div class="a" style="left:664.17px;top:1026.6px;width:82px;height:39.7px;background:#33343d;"></div>
<div class="a" style="left:749.33px;top:1026.6px;width:82px;height:39.7px;background:#3d3e49;"></div>
<div class="a" style="left:834.5px;top:1026.6px;width:82px;height:39.7px;background:#3d3e49;"></div>
<div class="a" style="left:919.67px;top:1026.6px;width:82px;height:39.7px;background:#3d3e49;"></div>
<div class="a" style="left:1004.83px;top:1026.6px;width:82px;height:39.7px;background:#33343d;"></div>
<div class="a" style="left:1090px;top:1026.6px;width:82px;height:39.7px;background:#33343d;"></div>
<div class="a" style="left:1175.17px;top:1026.6px;width:82px;height:39.7px;background:#33343d;"></div>
<div class="a" style="left:1260.33px;top:1026.6px;width:82px;height:39.7px;background:#33343d;"></div>
<div class="a" style="left:1345.5px;top:1026.6px;width:85px;height:39.7px;background:#33343d;border-radius:0 7px 7px 0"></div>
<svg style="left:1441px;top:1040px" width="20" height="14" viewBox="1441 1040 20 14"><path d="M1446.3 1040.5 H1458.5 A2 2 0 0 1 1460.5 1042.5 V1050.5 A2 2 0 0 1 1458.5 1052.5 H1446.3 L1441.3 1046.5 Z" fill="#6a6c7a"/><path d="M1450.4 1043.9 L1455.6 1049.1 M1455.6 1043.9 L1450.4 1049.1" stroke="#2c2d35" stroke-width="1.5" fill="none"/></svg>
<svg id="tx" style="left:0;top:0" width="1500" height="1125" viewBox="0 0 1500 1125"><text transform="translate(139.31 74.95) scale(1.002 1)" font-size="24.81" fill="#f4f4f6" style="font-weight:normal;" letter-spacing="0.3" stroke="#3d3d49" stroke-width="0.3">gatelab</text><text transform="translate(422.42 70.75) scale(1.237 1)" font-size="12.60" fill="#f4f4f6" style="font-weight:normal;" letter-spacing="1" stroke="#f4f4f6" stroke-width="0.5">120.00</text><text transform="translate(498.56 68.30) scale(0.950 1)" font-size="8.45" fill="#c4c6cf" letter-spacing="1" stroke="#c4c6cf" stroke-width="0.2">SYNC</text><text transform="translate(700.16 69.30) scale(1.057 1)" font-size="10.61" fill="#f0f0f3" letter-spacing="1.6" stroke="#f0f0f3" stroke-width="0.2">INIT</text><text transform="translate(1428.09 77.30) scale(0.982 1)" font-size="32.43" fill="#9aa2b2" style="font-family:'Liberation Serif',serif;font-style:italic;">i</text><text transform="translate(402.71 190.25) scale(1.037 1)" font-size="9.31" fill="#22e282" letter-spacing="1.3" stroke="#22e282" stroke-width="0.3">RANDOM</text><text transform="translate(585.15 190.33) scale(0.966 1)" font-size="9.67" fill="#9ea3b3" letter-spacing="1.5" stroke="#9ea3b3" stroke-width="0.15">REMIX</text><text transform="translate(868.45 190.33) scale(0.976 1)" font-size="9.52" fill="#9ea3b3" letter-spacing="1.5" stroke="#9ea3b3" stroke-width="0.15">INSTANT</text><text transform="translate(1048.46 190.33) scale(0.966 1)" font-size="9.52" fill="#9ea3b3" letter-spacing="1.5" stroke="#9ea3b3" stroke-width="0.15">RESET</text><text transform="translate(1081.04 277.75) scale(1.165 1)" font-size="9.45" fill="#2de07e" letter-spacing="1" stroke="#2de07e" stroke-width="0.3">0%</text><text transform="translate(302.12 374.55) scale(1.211 1)" font-size="20.49" fill="#00f58c" letter-spacing="2.5" stroke="#00f58c" stroke-width="1.3">1/16</text><text transform="translate(398.73 374.55) scale(1.050 1)" font-size="20.49" fill="#00f58c" letter-spacing="2.5" stroke="#00f58c" stroke-width="1.3">16</text><text transform="translate(485.83 374.55) scale(1.050 1)" font-size="20.49" fill="#00f58c" letter-spacing="2.5" stroke="#00f58c" stroke-width="1.3">0</text><text transform="translate(560.02 374.55) scale(1.099 1)" font-size="20.49" fill="#00f58c" letter-spacing="2.5" stroke="#00f58c" stroke-width="1.3">50</text><text transform="translate(633.71 374.55) scale(1.074 1)" font-size="20.49" fill="#00f58c" letter-spacing="2.5" stroke="#00f58c" stroke-width="1.3">100</text><text transform="translate(887.23 374.55) scale(1.050 1)" font-size="20.49" fill="#ff8fbe" letter-spacing="2.5" stroke="#ff8fbe" stroke-width="1.3">0</text><text transform="translate(1066.74 374.55) scale(1.033 1)" font-size="20.49" fill="#3fe0f7" letter-spacing="2.5" stroke="#3fe0f7" stroke-width="1.3">20K</text><text transform="translate(1156.94 374.55) scale(0.720 1)" font-size="20.49" fill="#3fe0f7" letter-spacing="2.5" stroke="#3fe0f7" stroke-width="1.3">1</text><text transform="translate(318.86 406.97) scale(0.843 1)" font-size="9.38" fill="#9ea3b3" letter-spacing="1.4" stroke="#9ea3b3" stroke-width="0.45">RATE</text><text transform="translate(397.07 406.97) scale(0.843 1)" font-size="9.24" fill="#9ea3b3" letter-spacing="1.4" stroke="#9ea3b3" stroke-width="0.45">STEPS</text><text transform="translate(474.46 406.97) scale(0.983 1)" font-size="9.24" fill="#9ea3b3" letter-spacing="1.4" stroke="#9ea3b3" stroke-width="0.45">SWING</text><text transform="translate(552.06 406.97) scale(0.962 1)" font-size="9.24" fill="#9ea3b3" letter-spacing="1.4" stroke="#9ea3b3" stroke-width="0.45">SMOOTH</text><text transform="translate(645.68 406.97) scale(0.830 1)" font-size="9.38" fill="#9ea3b3" letter-spacing="1.4" stroke="#9ea3b3" stroke-width="0.45">WET</text><text transform="translate(872.15 406.97) scale(0.892 1)" font-size="9.24" fill="#ff8fbe" letter-spacing="1.4" stroke="#ff8fbe" stroke-width="0.45">DENSITY</text><text transform="translate(1069.76 406.97) scale(0.912 1)" font-size="9.24" fill="#3fe0f7" letter-spacing="1.4" stroke="#3fe0f7" stroke-width="0.45">CUTOFF</text><text transform="translate(1153.77 406.97) scale(0.832 1)" font-size="9.24" fill="#3fe0f7" letter-spacing="1.4" stroke="#3fe0f7" stroke-width="0.45">RES</text><text transform="translate(137.90 353.25) scale(0.943 1)" font-size="8.58" fill="#e6e6ec" letter-spacing="1.6" stroke="#e6e6ec" stroke-width="0.3">Mono</text><text transform="translate(134.51 406.15) scale(0.958 1)" font-size="8.45" fill="#2de07e" letter-spacing="1.6" stroke="#2de07e" stroke-width="0.3">Stereo</text><text transform="translate(1221.55 408.35) scale(0.841 1)" font-size="14.68" fill="#ff4f6a" stroke="#ff4f6a" stroke-width="0.3">1</text><text transform="translate(1337.65 408.35) scale(0.841 1)" font-size="14.68" fill="#f5e36e" stroke="#f5e36e" stroke-width="0.3">1</text><text transform="translate(219.90 399.81) rotate(-90) scale(0.966 1)" font-size="8.58" fill="#e6e6ec" letter-spacing="1.3" stroke="#e6e6ec" stroke-width="0.3">LINK L-R</text><text transform="translate(1447.90 398.80) rotate(-90) scale(0.855 1)" font-size="10.74" fill="#e6e6ec" letter-spacing="1.3" stroke="#e6e6ec" stroke-width="0.5">BYPASS</text><text transform="translate(104.89 1051.05) scale(0.935 1)" font-size="13.23" fill="#ececf0" style="font-weight:normal;" letter-spacing="1.6" stroke="#ececf0" stroke-width="0.5">1</text><text transform="translate(188.60 1051.05) scale(1.398 1)" font-size="13.03" fill="#ececf0" style="font-weight:normal;" letter-spacing="1.6" stroke="#ececf0" stroke-width="0.5">2</text><text transform="translate(274.22 1051.05) scale(1.288 1)" font-size="13.03" fill="#ececf0" style="font-weight:normal;" letter-spacing="1.6" stroke="#ececf0" stroke-width="0.5">3</text><text transform="translate(361.18 1050.76) scale(1.013 1)" font-size="12.21" fill="#a0a6b6">+</text><text transform="translate(446.35 1050.76) scale(1.013 1)" font-size="12.21" fill="#a0a6b6">+</text><text transform="translate(531.51 1050.76) scale(1.013 1)" font-size="12.21" fill="#a0a6b6">+</text><text transform="translate(616.68 1050.76) scale(1.013 1)" font-size="12.21" fill="#a0a6b6">+</text><text transform="translate(701.85 1050.76) scale(1.013 1)" font-size="12.21" fill="#a0a6b6">+</text><text transform="translate(785.06 1051.05) scale(1.319 1)" font-size="13.03" fill="#ececf0" style="font-weight:normal;" letter-spacing="1.6" stroke="#ececf0" stroke-width="0.5">9</text><text transform="translate(865.66 1051.05) scale(1.126 1)" font-size="13.03" fill="#ececf0" style="font-weight:normal;" letter-spacing="1.6" stroke="#ececf0" stroke-width="0.5">10</text><text transform="translate(952.69 1051.05) scale(0.897 1)" font-size="13.23" fill="#ececf0" style="font-weight:normal;" letter-spacing="1.6" stroke="#ececf0" stroke-width="0.5">11</text><text transform="translate(1042.51 1050.76) scale(1.013 1)" font-size="12.21" fill="#a0a6b6">+</text><text transform="translate(1127.68 1050.76) scale(1.013 1)" font-size="12.21" fill="#a0a6b6">+</text><text transform="translate(1212.85 1050.76) scale(1.013 1)" font-size="12.21" fill="#a0a6b6">+</text><text transform="translate(1298.01 1050.76) scale(1.013 1)" font-size="12.21" fill="#a0a6b6">+</text><text transform="translate(1383.18 1050.76) scale(1.013 1)" font-size="12.21" fill="#a0a6b6">+</text></svg>
</div>
</body></html>
